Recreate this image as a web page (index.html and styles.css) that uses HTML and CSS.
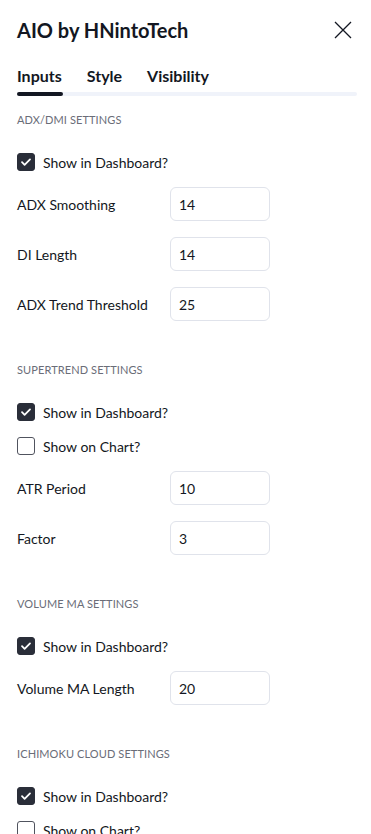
FILE: index.html
```html
<!DOCTYPE html>
<html lang="en">
<head>
<meta charset="utf-8">
<title>AIO by HNintoTech</title>
<link rel="stylesheet" href="styles.css">
</head>
<body>
<div class="dialog">
  <header class="head">
    <h1 class="title">AIO by HNintoTech</h1>
    <button class="close" aria-label="Close">
      <svg width="18" height="18" viewBox="0 0 18 18"><path d="M1 1L17 17M17 1L1 17" stroke="#131722" stroke-width="1.3" fill="none"/></svg>
    </button>
  </header>
  <nav class="tabs">
    <div class="tab-list">
      <span class="tab active">Inputs</span>
      <span class="tab">Style</span>
      <span class="tab">Visibility</span>
    </div>
    <div class="track"><div class="indicator"></div></div>
  </nav>

  <section class="group">
    <div class="group-title">ADX/DMI SETTINGS</div>
    <label class="check-row"><span class="box checked"><svg viewBox="0 0 18 18" width="18" height="18"><path d="M5 9.2l2.6 2.6L13 6.4" stroke="#fff" stroke-width="1.8" fill="none" stroke-linecap="round" stroke-linejoin="round"/></svg></span>Show in Dashboard?</label>
    <div class="field-row"><span class="label">ADX Smoothing</span><span class="input">14</span></div>
    <div class="field-row"><span class="label">DI Length</span><span class="input">14</span></div>
    <div class="field-row"><span class="label">ADX Trend Threshold</span><span class="input">25</span></div>
  </section>

  <section class="group">
    <div class="group-title">SUPERTREND SETTINGS</div>
    <label class="check-row"><span class="box checked"><svg viewBox="0 0 18 18" width="18" height="18"><path d="M5 9.2l2.6 2.6L13 6.4" stroke="#fff" stroke-width="1.8" fill="none" stroke-linecap="round" stroke-linejoin="round"/></svg></span>Show in Dashboard?</label>
    <label class="check-row"><span class="box"></span>Show on Chart?</label>
    <div class="field-row"><span class="label">ATR Period</span><span class="input">10</span></div>
    <div class="field-row"><span class="label">Factor</span><span class="input">3</span></div>
  </section>

  <section class="group">
    <div class="group-title">VOLUME MA SETTINGS</div>
    <label class="check-row"><span class="box checked"><svg viewBox="0 0 18 18" width="18" height="18"><path d="M5 9.2l2.6 2.6L13 6.4" stroke="#fff" stroke-width="1.8" fill="none" stroke-linecap="round" stroke-linejoin="round"/></svg></span>Show in Dashboard?</label>
    <div class="field-row"><span class="label">Volume MA Length</span><span class="input">20</span></div>
  </section>

  <section class="group">
    <div class="group-title">ICHIMOKU CLOUD SETTINGS</div>
    <label class="check-row"><span class="box checked"><svg viewBox="0 0 18 18" width="18" height="18"><path d="M5 9.2l2.6 2.6L13 6.4" stroke="#fff" stroke-width="1.8" fill="none" stroke-linecap="round" stroke-linejoin="round"/></svg></span>Show in Dashboard?</label>
    <label class="check-row"><span class="box"></span>Show on Chart?</label>
  </section>
</div>
</body>
</html>
```

FILE: styles.css
```css
* { box-sizing: border-box; }
html, body {
  margin: 0;
  padding: 0;
  background: #fff;
  color: #131722;
  font-family: Lato, "Open Sans", "Liberation Sans", sans-serif;
  font-size: 14px;
  overflow: hidden;
}
.dialog {
  padding: 0 14px 0 17px;
  height: 834px;
  overflow: hidden;
}
.head {
  display: flex;
  align-items: center;
  justify-content: space-between;
  height: 60px;
}
.title {
  margin: 0;
  font-size: 20px;
  font-weight: 700;
  line-height: 28px;
  color: #131722;
}
.close {
  border: 0;
  background: none;
  padding: 0;
  margin-right: 5px;
  width: 18px;
  height: 18px;
  display: flex;
}
.tabs {
  padding-top: 2px;
}
.tab-list {
  display: flex;
  gap: 25px;
  height: 28px;
  align-items: center;
}
.tab {
  font-size: 16px;
  font-weight: 700;
  line-height: 24px;
  color: #131722;
}
.track {
  margin-top: 2px;
  height: 4px;
  border-radius: 2px;
  background: #f0f3fa;
  width: 340px;
}
.indicator {
  width: 46px;
  height: 4px;
  border-radius: 2px;
  background: #131722;
}
.group {
  padding-top: 16px;
  padding-bottom: 17px;
}
.group-title {
  height: 16px;
  line-height: 16px;
  font-size: 11px;
  color: #6a6d78;
  margin-bottom: 17px;
  letter-spacing: 0.1px;
}
.check-row {
  display: flex;
  align-items: center;
  height: 34px;
  gap: 8px;
}
.box {
  width: 18px;
  height: 18px;
  border-radius: 3px;
  border: 1px solid #50535e;
  background: #fff;
  display: flex;
}
.box.checked {
  background: #2a2e39;
  border-color: #2a2e39;
}
.box svg { margin: -1px; }
.field-row {
  display: grid;
  grid-template-columns: 153px 100px;
  align-items: center;
  height: 50px;
}
.input {
  height: 34px;
  border: 1px solid #e0e3eb;
  border-radius: 6px;
  padding: 0 8px;
  display: flex;
  align-items: center;
}
```
